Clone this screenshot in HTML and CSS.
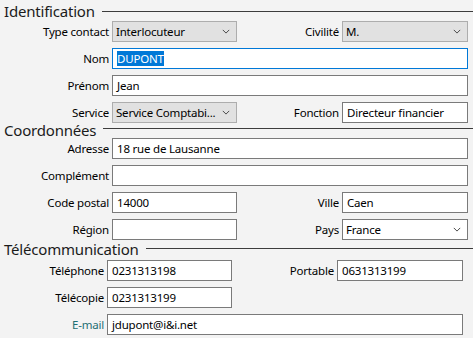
FILE: index.html
```html
<!DOCTYPE html>
<html lang="fr">
<head>
  <meta charset="UTF-8" />
  <title>Fiche contact</title>
  <link rel="stylesheet" href="styles.css">
</head>
<body>
  <div class="form">
    <div class="section-title first"><span>Identification</span><div class="rule"></div></div>
    <div class="grid">
      <label>Type contact</label>
      <div class="field select grey"><span>Interlocuteur</span><svg class="chevron" viewBox="0 0 10 6"><path d="M1 1 L5 5 L9 1" /></svg></div>
      <label>Civilité</label>
      <div class="field select grey"><span>M.</span><svg class="chevron" viewBox="0 0 10 6"><path d="M1 1 L5 5 L9 1" /></svg></div>

      <label>Nom</label>
      <div class="field wide focus"><span class="selected">DUPONT</span></div>

      <label>Prénom</label>
      <div class="field wide"><span>Jean</span></div>

      <label>Service</label>
      <div class="field select grey"><span>Service Comptabi...</span><svg class="chevron" viewBox="0 0 10 6"><path d="M1 1 L5 5 L9 1" /></svg></div>
      <label>Fonction</label>
      <div class="field"><span>Directeur financier</span></div>
    </div>

    <div class="section-title second"><span>Coordonnées</span><div class="rule"></div></div>
    <div class="grid">
      <label>Adresse</label>
      <div class="field wide"><span>18 rue de Lausanne</span></div>

      <label>Complément</label>
      <div class="field wide"></div>

      <label>Code postal</label>
      <div class="field"><span>14000</span></div>
      <label>Ville</label>
      <div class="field"><span>Caen</span></div>

      <label>Région</label>
      <div class="field"></div>
      <label>Pays</label>
      <div class="field select"><span>France</span><svg class="chevron" viewBox="0 0 10 6"><path d="M1 1 L5 5 L9 1" /></svg></div>
    </div>

    <div class="section-title third"><span>Télécommunication</span><div class="rule"></div></div>
    <div class="grid tight">
      <label>Téléphone</label>
      <div class="field"><span>0231313198</span></div>
      <label>Portable</label>
      <div class="field"><span>0631313199</span></div>

      <label>Télécopie</label>
      <div class="field"><span>0231313199</span></div>
      <div></div>
      <div></div>

      <label class="link">E-mail</label>
      <div class="field wide"><span>jdupont@i&amp;i.net</span></div>
    </div>
  </div>
</body>
</html>
```

FILE: styles.css
```css
body {
  margin: 0;
  background: #f3f3f3;
  font-family: "Noto Sans", "Open Sans", sans-serif;
  color: #000;
}

.form {
  width: 473px;
  height: 338px;
  overflow: hidden;
}

.section-title {
  box-sizing: border-box;
  display: flex;
  align-items: center;
  font-size: 15px;
  letter-spacing: -0.2px;
  color: #1b1b1b;
  padding-left: 4px;
}

.section-title span {
  line-height: 12px;
}

.section-title .rule {
  flex: 1;
  border-top: 1px solid #3c3c3c;
  margin-left: 7px;
}

.section-title.first { height: 21px; padding-top: 1px; }
.section-title.second { height: 17px; margin-top: -2px; }
.section-title.second .rule { margin-bottom: 3px; }
.section-title.third { height: 20px; padding-bottom: 3px; }

.grid {
  display: grid;
  grid-template-columns: 109px 125px 1fr 126px;
  grid-auto-rows: 21px;
  column-gap: 3px;
  row-gap: 6px;
  width: 468px;
  font-size: 11.5px;
  letter-spacing: -0.2px;
}

.grid.tight {
  grid-template-columns: 104px 125px 1fr 126px;
  width: 463px;
}

.grid label {
  text-align: right;
  line-height: 21px;
  white-space: nowrap;
}

.grid label.link {
  color: #1f6f73;
}

.field {
  box-sizing: border-box;
  height: 21px;
  background: #fff;
  border: 1px solid #7a7a7a;
  display: flex;
  align-items: center;
  padding: 0 4px;
  white-space: nowrap;
  overflow: hidden;
}

.field.wide {
  grid-column: 2 / 5;
}

.field.focus {
  border-color: #0078d7;
}

.field .selected {
  background: #0078d7;
  color: #fff;
  line-height: 15px;
}

.field.select {
  padding-left: 3px;
}

.field.select span {
  flex: 1;
  overflow: hidden;
}

.field.grey {
  background: #e1e1e1;
  border-color: #adadad;
}

.chevron {
  flex-shrink: 0;
  width: 8px;
  height: 5px;
  margin-right: 2px;
  fill: none;
  stroke: #444;
  stroke-width: 1.2;
}
```
